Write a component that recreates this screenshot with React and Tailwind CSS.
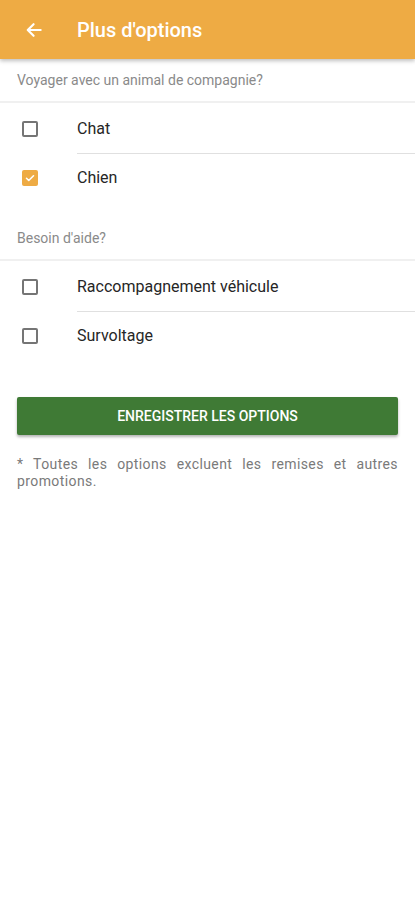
import React, { useState } from "react";

const font = { fontFamily: "Roboto, 'Liberation Sans', sans-serif" };

const CheckBox = ({ checked }) =>
  checked ? (
    <span className="flex h-[16px] w-[16px] items-center justify-center rounded-[2px] bg-[#eeab44]">
      <svg width="12" height="12" viewBox="0 0 24 24" fill="none">
        <path d="M5 12.5l4.5 4.5L19 7.5" stroke="white" strokeWidth="3.2" strokeLinecap="round" strokeLinejoin="round" />
      </svg>
    </span>
  ) : (
    <span className="block h-[16px] w-[16px] rounded-[2px] border-2 border-[#757575]" />
  );

const OptionRow = ({ label, checked, onToggle, divider }) => (
  <div>
    <button type="button" onClick={onToggle} className="flex h-[48px] w-full items-center text-left">
      <span className="flex w-[77px] pl-[22px]">
        <CheckBox checked={checked} />
      </span>
      <span className="text-[16px] text-[#262626]">{label}</span>
    </button>
    {divider && <div className="ml-[77px] h-px bg-[#e0e0e0]" />}
  </div>
);

const SectionLabel = ({ children }) => (
  <div className="flex h-[44px] items-center border-b-2 border-[#f0f0f0] px-[17px] text-[14px] text-[#8a8a8a]">
    {children}
  </div>
);

export default function App() {
  const [opts, setOpts] = useState({ chat: false, chien: true, racc: false, surv: false });
  const toggle = (k) => setOpts({ ...opts, [k]: !opts[k] });

  return (
    <div className="min-h-[900px] w-[415px] bg-white" style={font}>
      <div className="relative z-10 flex h-[59px] items-center bg-[#eeab44] shadow-[0_2px_4px_rgba(0,0,0,0.25)]">
        <button type="button" className="flex w-[77px] items-center pl-[24px]">
          <svg width="20" height="20" viewBox="0 0 24 24" fill="none">
            <path d="M20 12H5M11.5 5L4.5 12l7 7" stroke="white" strokeWidth="2.6" strokeLinecap="round" strokeLinejoin="round" />
          </svg>
        </button>
        <h1 className="text-[20px] font-medium text-white">Plus d'options</h1>
      </div>

      <SectionLabel>Voyager avec un animal de compagnie?</SectionLabel>
      <div className="pt-[2px]">
        <OptionRow label="Chat" checked={opts.chat} onToggle={() => toggle("chat")} divider />
        <OptionRow label="Chien" checked={opts.chien} onToggle={() => toggle("chien")} />
      </div>

      <div className="h-[15px]" />
      <SectionLabel>Besoin d'aide?</SectionLabel>
      <div className="pt-[2px]">
        <OptionRow label="Raccompagnement véhicule" checked={opts.racc} onToggle={() => toggle("racc")} divider />
        <OptionRow label="Survoltage" checked={opts.surv} onToggle={() => toggle("surv")} />
      </div>

      <div className="px-[17px] pt-[37px]">
        <button
          type="button"
          className="h-[38px] w-full rounded-[2px] bg-[#3f7a35] text-[14px] font-medium text-white shadow-[0_2px_3px_rgba(0,0,0,0.3)]"
        >
          ENREGISTRER LES OPTIONS
        </button>
        <p className="mt-[21px] text-justify text-[14px] leading-[17px] tracking-[0.4px] text-[#7a7a7a]">
          * Toutes les options excluent les remises et autres promotions.
        </p>
      </div>
    </div>
  );
}
